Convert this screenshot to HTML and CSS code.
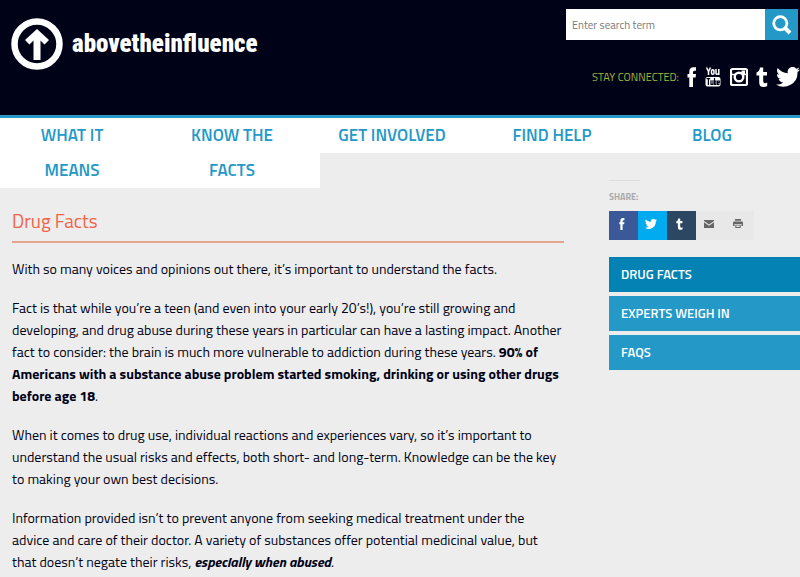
FILE: index.html
```html
<!DOCTYPE html>
<html lang="en">
<head>
  <meta charset="utf-8">
  <title>Drug Facts | Above the Influence</title>
  <link rel="stylesheet" href="styles.css">
</head>
<body>

  <header class="header">
    <a class="logo" href="#">
      <svg width="52" height="52" viewBox="0 0 52 52" aria-hidden="true">
        <circle cx="26" cy="26" r="22.500" fill="none" stroke="#fff" stroke-width="6.500"/>
        <path d="M26 11 L38 22 L33.500 26.500 L29.500 22.500 V42 H22.500 V22.500 L18.500 26.500 L14 22 Z" fill="#fff"/>
      </svg>
      <span>abovetheinfluence</span>
    </a>
    <div class="header-right">
      <form class="search">
        <input type="text" placeholder="Enter search term" aria-label="Search">
        <button type="button" aria-label="Search">
          <svg width="20" height="20" viewBox="0 0 20 20" fill="none" stroke="#fff">
            <circle cx="8.300" cy="8.300" r="6.600" stroke-width="2.800"/>
            <path d="M13 13 L18 18" stroke-width="4"/>
          </svg>
        </button>
      </form>
      <div class="social">
        <span>STAY CONNECTED:</span>
        <a href="#" aria-label="Facebook"><svg width="9" height="20" viewBox="0 0 9 20"><use href="#icon-facebook"/></svg></a>
        <a href="#" aria-label="YouTube">
          <svg width="18" height="20" viewBox="-1 0 18 20" fill="none" stroke="#fff" stroke-width="1.500">
            <path d="M1.500 0.500 L3.500 4.500 L5.500 0.500 M3.500 4.500 V8"/>
            <rect x="6.500" y="2.700" width="2.500" height="4.500" rx="1.200"/>
            <path d="M11 2 V6.500 Q11.500 8 13.500 6.500 M13.800 2 V8"/>
            <rect x="0.500" y="10" width="15" height="9.500" rx="2" fill="#fff" stroke="none"/>
            <g stroke="#000217" stroke-width="1.200">
              <path d="M1.500 11.700 H5.300 M3.400 11.700 V18"/>
              <path d="M6 13.300 V17.300 H8 V13.300"/>
              <path d="M9.500 11 V17.400 H11 V14 H9.500"/>
              <path d="M14.500 17.400 H12.600 V14 H14.300 V15.700 H12.600"/>
            </g>
          </svg>
        </a>
        <a href="#" aria-label="Instagram">
          <svg width="18" height="20" viewBox="0 0 18 20" fill="none" stroke="#fff">
            <rect x="1" y="2" width="16" height="16" rx="1.500" stroke-width="2.200"/>
            <path d="M1 7.500 H5 M13 7.500 H17" stroke-width="1.500"/>
            <circle cx="9" cy="10" r="4.300" stroke-width="2.400"/>
            <rect x="11.500" y="3.500" width="3.500" height="3.500" fill="#fff" stroke="none"/>
          </svg>
        </a>
        <a href="#" aria-label="Tumblr"><svg width="12" height="20" viewBox="0 0 12 20"><use href="#icon-tumblr"/></svg></a>
        <a href="#" aria-label="Twitter"><svg width="24" height="20" viewBox="0 0 24 20"><use href="#icon-twitter"/></svg></a>
      </div>
    </div>
  </header>

  <nav class="main-nav">
    <a href="#">WHAT IT MEANS</a>
    <a href="#">KNOW THE FACTS</a>
    <a href="#">GET INVOLVED</a>
    <a href="#">FIND HELP</a>
    <a href="#">BLOG</a>
  </nav>

  <div class="page">
    <main class="content">
      <h1>Drug Facts</h1>
      <p>With so many voices and opinions out there, it’s important to understand the facts.</p>
      <p>Fact is that while you’re a teen (and even into your early 20’s!), you’re still growing and<br>
      developing, and drug abuse during these years in particular can have a lasting impact. Another<br>
      fact to consider: the brain is much more vulnerable to addiction during these years. <strong>90% of<br>
      Americans with a substance abuse problem started smoking, drinking or using other drugs<br>
      before age 18</strong>.</p>
      <p>When it comes to drug use, individual reactions and experiences vary, so it’s important to<br>
      understand the usual risks and effects, both short- and long-term. Knowledge can be the key<br>
      to making your own best decisions.</p>
      <p>Information provided isn’t to prevent anyone from seeking medical treatment under the<br>
      advice and care of their doctor. A variety of substances offer potential medicinal value, but<br>
      that doesn’t negate their risks, <strong><em>especially when abused</em></strong>.</p>
    </main>

    <aside class="sidebar">
      <div class="share">
        <h2>SHARE:</h2>
        <div class="share-buttons">
          <a class="facebook" href="#" aria-label="Facebook"><svg width="6" height="12" viewBox="0 0 10 20"><use href="#icon-facebook"/></svg></a>
          <a class="twitter" href="#" aria-label="Twitter"><svg width="12" height="10" viewBox="0 0 24 20"><use href="#icon-twitter"/></svg></a>
          <a class="tumblr" href="#" aria-label="Tumblr"><svg width="7" height="12" viewBox="0 0 12 20"><use href="#icon-tumblr"/></svg></a>
          <a href="#" aria-label="Email">
            <svg width="10" height="8" viewBox="0 0 10 8"><path d="M0 0 H10 V1 L5 4.500 L0 1 Z M0 2.300 L5 5.700 L10 2.300 V8 H0 Z" fill="#666"/></svg>
          </a>
          <a href="#" aria-label="Print">
            <svg width="10" height="9" viewBox="0 0 10 9"><path d="M2 0 H8 V1.800 H2 Z M1 2.500 H9 Q10 2.500 10 3.500 V7 H8.500 V5 H1.500 V7 H0 V3.500 Q0 2.500 1 2.500 Z M2.300 5.800 H7.700 V9 H2.300 Z M3.300 6.500 V8 H6.700 V6.500 Z" fill="#666" fill-rule="evenodd"/></svg>
          </a>
        </div>
      </div>
      <nav class="side-nav">
        <a class="active" href="#">DRUG FACTS</a>
        <a href="#">EXPERTS WEIGH IN</a>
        <a href="#">FAQS</a>
      </nav>
    </aside>
  </div>

  <!-- shared social icons -->
  <svg class="symbols" aria-hidden="true">
    <path id="icon-facebook" fill="#fff" d="M9 0.200 V3.700 H7.400 Q6 3.700 6 5.200 V7 H9 L8.600 10.500 H6 V20 H2.300 V10.500 H0.500 V7 H2.300 V4.800 Q2.300 0.200 6.500 0.200 Z"/>
    <path id="icon-tumblr" fill="#fff" d="M4 0.500 H7.200 V5 H11 V8.500 H7.200 V14 Q7.200 16.300 9 16.300 Q10.200 16.200 11.200 15.500 V19 Q9.500 20 7.500 20 Q3.200 20 3.200 15.500 V8.500 H0.500 V5.500 Q3.500 4.500 4 0.500 Z"/>
    <path id="icon-twitter" fill="#fff" d="M24 2.400 A9.800 9.800 0 0 1 21.200 3.150 A4.900 4.900 0 0 0 23.300 0.450 A9.900 9.900 0 0 1 20.200 1.650 A4.900 4.900 0 0 0 11.800 6.150 A14 14 0 0 1 1.700 1 A4.900 4.900 0 0 0 3.200 7.600 A4.900 4.900 0 0 1 1 7 A4.900 4.900 0 0 0 4.900 11.900 A5 5 0 0 1 2.700 12 A4.900 4.900 0 0 0 7.300 15.400 A9.900 9.900 0 0 1 0 17.500 A14 14 0 0 0 21.500 5 A10 10 0 0 0 24 2.400 Z"/>
  </svg>

</body>
</html>
```
FILE: styles.css
```css
* {
  box-sizing: border-box;
}
body {
  margin: 0;
  background: #ededed;
  color: #000217;
  font-family: "Titillium Web", Roboto, sans-serif;
  font-size: 14px;
  line-height: 22px;
}
a {
  color: inherit;
  text-decoration: none;
}
svg {
  display: block;
}
.symbols {
  width: 0;
  height: 0;
}

.header {
  display: flex;
  justify-content: space-between;
  height: 118px;
  background: #000217;
  border-bottom: 3px solid #2499c7;
}
.logo {
  display: flex;
  align-items: center;
  align-self: flex-start;
  gap: 9px;
  padding: 18px 0 0 11px;
  color: #fff;
  font-family: "Roboto Condensed", "Open Sans Condensed", "Titillium Web", sans-serif;
  font-size: 25px;
  font-weight: 900;
}
.header-right {
  display: flex;
  flex-direction: column;
  align-items: flex-end;
  gap: 26px;
  padding-top: 9px;
}
.search {
  display: flex;
  height: 31px;
  margin-right: 2px;
}
.search input {
  width: 199px;
  padding: 0 6px;
  border: 0;
  background: #fff;
  font: inherit;
  font-size: 11px;
}
.search input::placeholder {
  color: #777;
}
.search button {
  display: flex;
  align-items: center;
  justify-content: center;
  width: 33px;
  padding: 0;
  border: 0;
  background: #2499c7;
}
.social {
  display: flex;
  align-items: center;
  gap: 8px;
  color: #a4b83b;
  font-size: 11px;
}

.main-nav {
  display: grid;
  grid-template-columns: repeat(5, 1fr);
  align-items: start;
  height: 70px;
}
.main-nav a {
  padding: 0 32px 0 16px;
  background: #fff;
  color: #2499c7;
  font-size: 17px;
  font-weight: 600;
  line-height: 35px;
  text-align: center;
}

.page {
  display: flex;
  justify-content: space-between;
}
.content {
  width: 69%;
  margin-left: 12px;
}
.content h1 {
  margin: 20px 0 15px;
  padding-bottom: 7px;
  border-bottom: 2px solid #e5a48c;
  color: #f0654a;
  font-size: 19px;
  font-weight: normal;
  line-height: 26px;
}
.content p {
  margin: 0 0 17px;
}

.sidebar {
  width: 191px;
}
.share h2 {
  width: 31px;
  margin: -8px 0 7px;
  padding-top: 8px;
  border-top: 1px solid #ddd;
  color: #aaa;
  font-size: 9px;
  line-height: 15px;
}
.share-buttons {
  display: flex;
  margin-bottom: 17px;
}
.share-buttons a {
  display: flex;
  align-items: center;
  justify-content: center;
  width: 29px;
  height: 29px;
  padding: 0 4px 4px 0;
  background: #e8e8e8;
}
.share-buttons .facebook {
  background: #3b5998;
}
.share-buttons .twitter {
  background: #00abf0;
}
.share-buttons .tumblr {
  background: #2c4762;
}
.side-nav {
  display: grid;
  gap: 4px;
}
.side-nav a {
  padding-left: 12px;
  background: #2499c7;
  color: #fff;
  font-size: 13px;
  font-weight: 600;
  line-height: 35px;
}
.side-nav .active {
  background: #0482b3;
}
```
